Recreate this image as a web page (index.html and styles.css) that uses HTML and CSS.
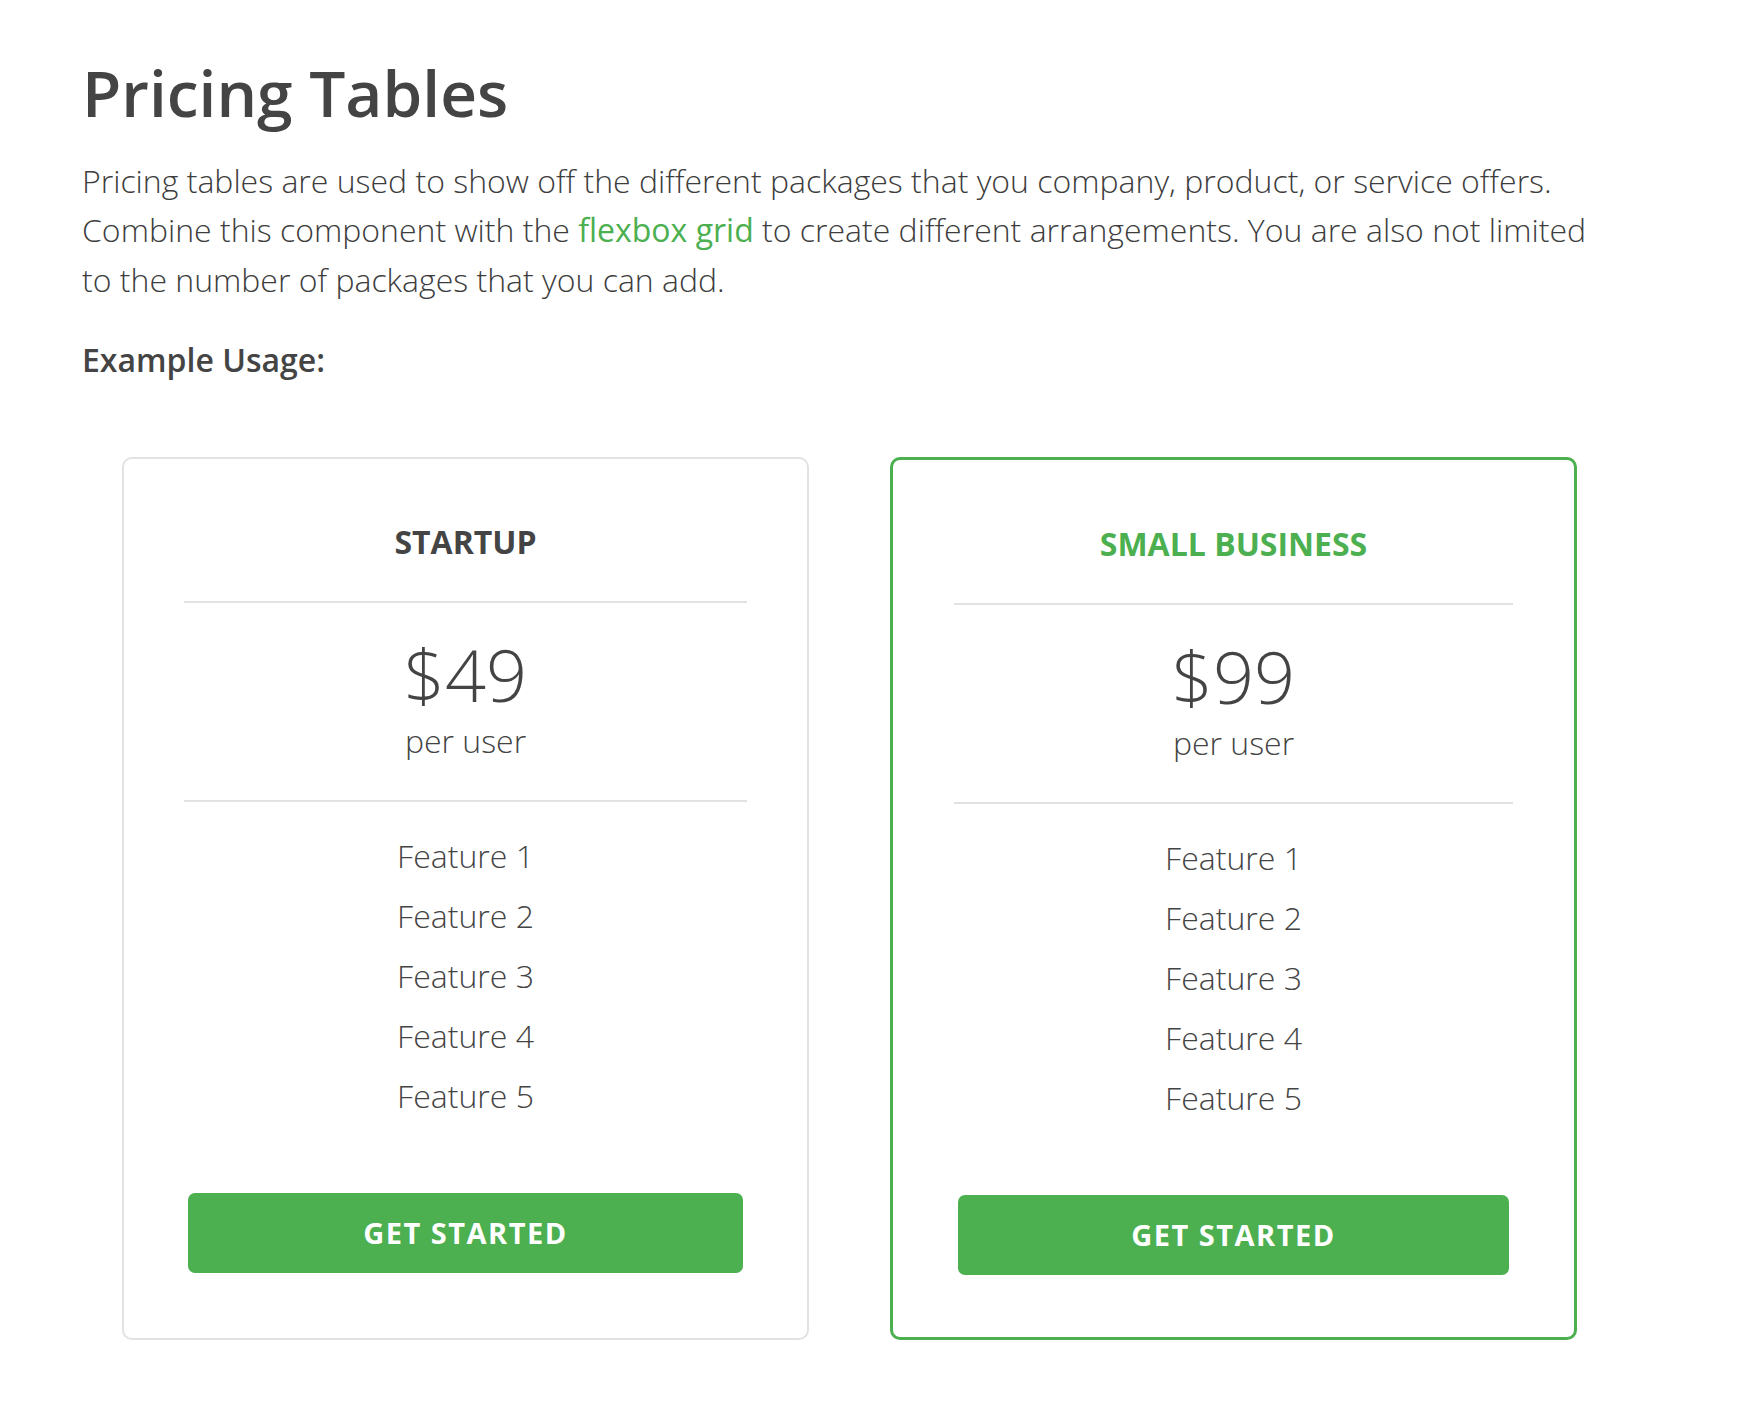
FILE: index.html
```html
<!DOCTYPE html>
<html>
	<head>
		<meta charset="utf-8">
		<title>Pricing Tables</title>
		<link rel="stylesheet" href="styles.css">
	</head>
	<body>
		<div class="page">
			<h1 class="page-title">Pricing Tables</h1>
			<p class="intro">Pricing tables are used to show off the different packages that you company, product, or service offers. Combine this component with the <a href="javascript:;">flexbox grid</a> to create different arrangements. You are also not limited to the number of packages that you can add.</p>
			<p class="usage">Example Usage:</p>

			<div class="plans">
				<div class="plan">
					<div class="plan-name">STARTUP</div>
					<div class="plan-price">
						<div class="amount">$49</div>
						<div class="per">per user</div>
					</div>
					<ul class="plan-features">
						<li>Feature 1</li>
						<li>Feature 2</li>
						<li>Feature 3</li>
						<li>Feature 4</li>
						<li>Feature 5</li>
					</ul>
					<a class="plan-btn" href="javascript:;">GET STARTED</a>
				</div>

				<div class="plan plan-featured">
					<div class="plan-name">SMALL BUSINESS</div>
					<div class="plan-price">
						<div class="amount">$99</div>
						<div class="per">per user</div>
					</div>
					<ul class="plan-features">
						<li>Feature 1</li>
						<li>Feature 2</li>
						<li>Feature 3</li>
						<li>Feature 4</li>
						<li>Feature 5</li>
					</ul>
					<a class="plan-btn" href="javascript:;">GET STARTED</a>
				</div>
			</div>
		</div>
	</body>
</html>
```

FILE: styles.css
```css
*{
	padding: 0px;
	margin: 0px;
	box-sizing: border-box;
}
body{
	font-family: "Open Sans", "Liberation Sans", sans-serif;
	color: #444;
	background-color: #fff;
}
.page{
	width: 1602px;
	padding: 55px 0px 60px 82px;
}
.page-title{
	font-size: 64px;
	font-weight: 600;
	line-height: 1.2;
	color: #444;
}
.intro{
	margin-top: 24px;
	font-size: 32px;
	font-weight: 350;
	line-height: 49.5px;
	color: #3d3d3d;
}
.intro a{
	color: #4caf50;
	text-decoration: none;
	font-weight: 400;
}
.usage{
	margin-top: 31px;
	font-size: 32px;
	font-weight: 600;
	line-height: 49.5px;
}

/* pricing cards */
.plans{
	display: flex;
	gap: 81px;
	margin: 72px 0px 0px 40px;
}
.plan{
	width: 687px;
	border: 2px solid #e2e2e2;
	border-radius: 10px;
	padding: 64px 60px 54px;
	text-align: center;
	display: flex;
	flex-direction: column;
}
.plan-featured{
	border: 3px solid #4caf50;
	padding: 65px 61px 62px;
}
.plan-name{
	font-size: 32px;
	font-weight: 700;
	line-height: 1.2;
	padding-bottom: 40px;
	border-bottom: 2px solid #e2e2e2;
}
.plan-featured .plan-name{
	color: #4caf50;
}
.plan-price{
	padding: 35px 0px 39px;
	border-bottom: 2px solid #e2e2e2;
	font-weight: 300;
}
.amount{
	font-size: 72px;
	line-height: 1;
}
.per{
	margin-top: 12px;
	font-size: 32px;
	line-height: 1.2;
}
.plan-features{
	list-style: none;
	padding-top: 24px;
	font-size: 32px;
	font-weight: 300;
	line-height: 60px;
}
.plan-btn{
	display: block;
	margin: 67px 4px 0px;
	height: 80px;
	line-height: 80px;
	background-color: #4caf50;
	border-radius: 7px;
	color: #fff;
	text-decoration: none;
	font-size: 29px;
	font-weight: 700;
	letter-spacing: 1.5px;
}
```
